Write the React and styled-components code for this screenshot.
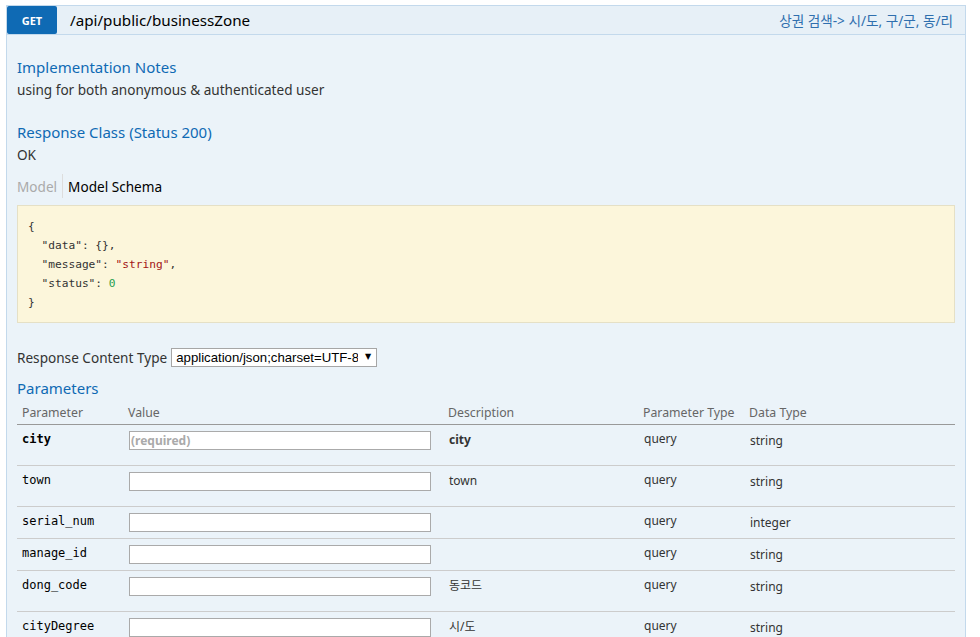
import React from "react";
import styled, { createGlobalStyle } from "styled-components";

const GlobalStyle = createGlobalStyle`
  html, body { margin: 0; padding: 0; background: #ffffff; }
  body {
    font-family: "Noto Sans", "Noto Sans CJK KR", sans-serif;
    font-size: 13.6px;
    color: #333333;
  }
`;

const Wrap = styled.div`
  width: 960px;
  margin: 5px 0 0 6px;
`;

const Heading = styled.div`
  display: flex;
  align-items: center;
  height: 28px;
  background: #e7f0f7;
  border: 1px solid #c3d9ec;
`;

const Verb = styled.span`
  display: flex;
  align-items: center;
  justify-content: center;
  width: 50px;
  height: 28px;
  background: #0f6ab4;
  color: #ffffff;
  font-size: 11px;
  font-weight: 700;
  border-radius: 2px;
`;

const Path = styled.span`
  margin-left: 13px;
  font-size: 15.2px;
  color: #000000;
  flex: 1;
`;

const Summary = styled.span`
  margin-right: 12px;
  font-size: 13.6px;
  color: #2f6fae;
`;

const Content = styled.div`
  background: #ebf3f9;
  border: 1px solid #c3d9ec;
  border-top: none;
  padding: 10px 10px 20px;
`;

const H4 = styled.h4`
  margin: 0;
  padding: ${(p) => p.$pt}px 0 5px;
  font-size: 15px;
  font-weight: 400;
  line-height: 15px;
  color: #0f6ab4;
`;

const P = styled.p`
  margin: 0;
  padding: 0 0 10px;
  line-height: 19px;
  color: #333333;
`;

const SigNav = styled.ul`
  display: flex;
  list-style: none;
  margin: 0 0 7px;
  padding: 0;
`;

const SigTab = styled.li`
  margin: 0 5px 0 0;
  padding: 3px 5px 2px 0;
  line-height: 19px;
  border-right: ${(p) => (p.$sep ? "1px solid #dddddd" : "none")};
  color: ${(p) => (p.$active ? "#000000" : "#aaaaaa")};
`;

const CodeBox = styled.pre`
  margin: 0;
  padding: 11px 10px 10px;
  background: #fcf6db;
  border: 1px solid #e5e0c6;
  font-family: "DejaVu Sans Mono", monospace;
  font-size: 11.2px;
  line-height: 19px;
  color: #333333;
`;

const Str = styled.span`
  color: #a31515;
`;
const Num = styled.span`
  color: #28a050;
`;

const ContentType = styled.div`
  display: flex;
  align-items: center;
  gap: 4px;
  margin-top: 25px;
  height: 19px;
`;

const SelectWrap = styled.span`
  position: relative;
  display: inline-block;
`;

const Select = styled.select`
  appearance: none;
  -webkit-appearance: none;
  display: block;
  height: 19px;
  width: 206px;
  padding: 0 18px 0 4px;
  border: 1px solid #a6a6a6;
  border-radius: 0;
  background: #ffffff;
  font-family: "Liberation Sans", Arial, sans-serif;
  font-size: 13.2px;
  color: #000000;
`;

const Arrow = styled.span`
  position: absolute;
  right: 6px;
  top: 4px;
  font-size: 8px;
  line-height: 10px;
  color: #000000;
  pointer-events: none;
  font-family: "DejaVu Sans", sans-serif;
`;

const Table = styled.table`
  width: 938px;
  border-collapse: collapse;
  table-layout: fixed;
`;

const Th = styled.th`
  padding: 5px;
  text-align: left;
  font-weight: 400;
  font-size: 12.3px;
  line-height: 13px;
  color: #666666;
  border-bottom: 1px solid #999999;
`;

const Td = styled.td`
  padding: ${(p) => (p.$shift ? "8px 6px 6px" : "6px 6px 6px")};
  padding-left: ${(p) => (p.$first ? "5px" : "6px")};
  vertical-align: top;
  font-size: 12px;
  line-height: 15px;
  color: #333333;
  border-bottom: 1px solid #cccccc;
`;

const ParamName = styled.code`
  font-family: "DejaVu Sans Mono", monospace;
  font-size: 12px;
  font-weight: ${(p) => (p.$required ? 700 : 400)};
  color: #000000;
`;

const Input = styled.input`
  display: block;
  box-sizing: border-box;
  width: 302px;
  height: 19px;
  margin: 0;
  padding: 0 1px;
  border: 1px solid #aaaaaa;
  background: #ffffff;
  font-family: "Noto Sans", sans-serif;
  font-size: 12px;
  &::placeholder {
    color: #aaaaaa;
    font-weight: 700;
  }
`;

const Desc = styled.div`
  font-size: 12px;
  line-height: 15px;
  padding-top: 1px;
  padding-bottom: ${(p) => (p.$has ? "12px" : "0")};
  color: #333333;
  font-weight: ${(p) => (p.$bold ? 700 : 400)};
`;

const params = [
  { name: "city", required: true, desc: "city", type: "string" },
  { name: "town", desc: "town", type: "string" },
  { name: "serial_num", desc: "", type: "integer" },
  { name: "manage_id", desc: "", type: "string" },
  { name: "dong_code", desc: "동코드", type: "string" },
  { name: "cityDegree", desc: "시/도", type: "string" },
];

export default function App() {
  return (
    <>
      <GlobalStyle />
      <Wrap>
        <Heading>
          <Verb>GET</Verb>
          <Path>/api/public/businessZone</Path>
          <Summary>상권 검색-&gt; 시/도, 구/군, 동/리</Summary>
        </Heading>
        <Content>
          <H4 $pt={15}>Implementation Notes</H4>
          <P>using for both anonymous &amp; authenticated user</P>
          <H4 $pt={16}>Response Class (Status 200)</H4>
          <P>OK</P>
          <SigNav>
            <SigTab $sep>Model</SigTab>
            <SigTab $active>Model Schema</SigTab>
          </SigNav>
          <CodeBox>
            {"{\n  \"data\": {},\n  \"message\": "}
            <Str>"string"</Str>
            {",\n  \"status\": "}
            <Num>0</Num>
            {"\n}"}
          </CodeBox>
          <ContentType>
            <span>Response Content Type</span>
            <SelectWrap>
              <Select defaultValue="json">
                <option value="json">application/json;charset=UTF-8</option>
              </Select>
              <Arrow>▼</Arrow>
            </SelectWrap>
          </ContentType>
          <H4 $pt={14}>Parameters</H4>
          <Table>
            <colgroup>
              <col style={{ width: "106px" }} />
              <col style={{ width: "320px" }} />
              <col style={{ width: "195px" }} />
              <col style={{ width: "106px" }} />
              <col />
            </colgroup>
            <thead>
              <tr>
                <Th>Parameter</Th>
                <Th>Value</Th>
                <Th>Description</Th>
                <Th>Parameter Type</Th>
                <Th>Data Type</Th>
              </tr>
            </thead>
            <tbody>
              {params.map((p) => (
                <tr key={p.name}>
                  <Td $first>
                    <ParamName $required={p.required}>{p.name}</ParamName>
                  </Td>
                  <Td>
                    <Input placeholder={p.required ? "(required)" : ""} />
                  </Td>
                  <Td>
                    <Desc $has={!!p.desc} $bold={p.required}>
                      {p.desc}
                    </Desc>
                  </Td>
                  <Td>query</Td>
                  <Td $shift>{p.type}</Td>
                </tr>
              ))}
            </tbody>
          </Table>
        </Content>
      </Wrap>
    </>
  );
}
